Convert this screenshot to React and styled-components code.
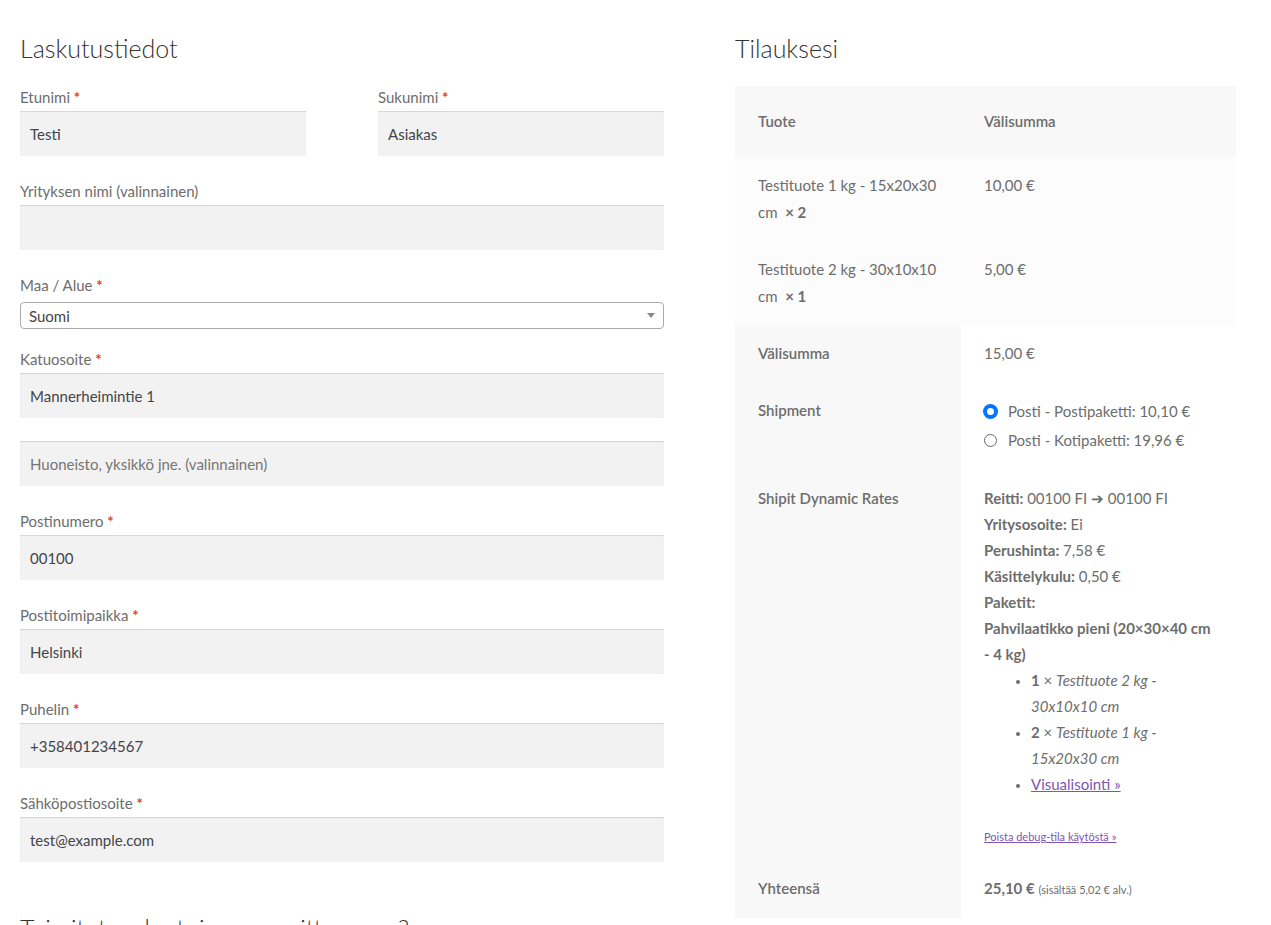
import React from 'react';
import styled, { createGlobalStyle } from 'styled-components';

const Global = createGlobalStyle`
  body {
    margin: 0;
    background: #fff;
    font-family: 'Source Sans Pro', Lato, 'Noto Sans', sans-serif;
    color: #6d6d6d;
    font-size: 15px;
  }
`;

const Page = styled.div`
  display: grid;
  grid-template-columns: 644px 501px;
  column-gap: 71px;
  padding: 30px 0 0 20px;
  height: 895px;
  overflow: hidden;
`;

const Heading = styled.h3`
  margin: 0 0 ${({ $mb }) => $mb || 20}px;
  font-size: 25px;
  font-weight: 300;
  color: #333;
  line-height: 36px;
`;

const Row = styled.div`
  display: grid;
  grid-template-columns: 286px 286px;
  justify-content: space-between;
`;

const Field = styled.div`
  margin-bottom: ${({ $mb }) => ($mb === undefined ? 24 : $mb)}px;
`;

const Label = styled.label`
  display: block;
  line-height: 22px;
  margin-bottom: 3px;
`;

const Req = styled.span`
  color: #e2401c;
  font-weight: 700;
`;

const Input = styled.div`
  height: 45px;
  box-sizing: border-box;
  background: #f2f2f2;
  box-shadow: inset 0 1px 1px rgba(0, 0, 0, 0.125);
  padding: 0 10px;
  display: flex;
  align-items: center;
  color: ${({ $ph }) => ($ph ? '#757575' : '#43454b')};
`;

const Select = styled.div`
  height: 27px;
  box-sizing: border-box;
  border: 1px solid #aaa;
  border-radius: 4px;
  padding: 0 8px;
  display: flex;
  align-items: center;
  justify-content: space-between;
  color: #444;
  margin-top: 6px;
`;

const Caret = styled.span`
  width: 0;
  height: 0;
  border-left: 4px solid transparent;
  border-right: 4px solid transparent;
  border-top: 5px solid #888;
`;

const Table = styled.table`
  width: 100%;
  table-layout: fixed;
  border-collapse: collapse;
  line-height: 27px;
  margin-top: 12px;
`;

const Th = styled.th`
  text-align: left;
  font-weight: 600;
  vertical-align: top;
  padding: ${({ $p }) => $p || '15px 23px'};
  background: ${({ $bg }) => $bg || '#f8f8f8'};
`;

const Td = styled.td`
  vertical-align: top;
  padding: ${({ $p }) => $p || '15px 23px'};
  background: ${({ $bg }) => $bg || '#fff'};
`;

const Radio = styled.div`
  display: flex;
  align-items: center;
  gap: 11px;
  line-height: 29px;
  white-space: nowrap;
`;

const Dot = styled.span`
  flex-shrink: 0;
  width: 13px;
  height: 13px;
  border-radius: 50%;
  box-sizing: border-box;
  border: ${({ $on }) => ($on ? '3px solid #0075ff' : '1px solid #666')};
  box-shadow: ${({ $on }) => ($on ? '0 0 0 1px #0075ff' : 'none')};
  background: #fff;
`;

const Line = styled.div`
  line-height: 26px;
`;

const List = styled.ul`
  margin: 0;
  padding-left: 47px;
  line-height: 26px;
  li::marker { font-size: 12px; }
`;

const Link = styled.a`
  color: #7f54b3;
  text-decoration: underline;
  font-size: ${({ $small }) => ($small ? '11px' : 'inherit')};
`;

const Debug = styled.div`
  margin-top: 30px;
  line-height: 16px;
`;

const Small = styled.small`
  font-size: 11px;
`;

const fields = [
  ['Katuosoite', 'Mannerheimintie 1', true, 23],
  [null, 'Huoneisto, yksikkö jne. (valinnainen)', false],
  ['Postinumero', '00100', true],
  ['Postitoimipaikka', 'Helsinki', true],
  ['Puhelin', '+358401234567', true],
  ['Sähköpostiosoite', 'test@example.com', true, 48],
];

export default function App() {
  return (
    <>
      <Global />
      <Page>
        <div>
          <Heading>Laskutustiedot</Heading>
          <Row>
            <Field>
              <Label>Etunimi <Req>*</Req></Label>
              <Input>Testi</Input>
            </Field>
            <Field>
              <Label>Sukunimi <Req>*</Req></Label>
              <Input>Asiakas</Input>
            </Field>
          </Row>
          <Field>
            <Label>Yrityksen nimi (valinnainen)</Label>
            <Input />
          </Field>
          <Field $mb={19}>
            <Label>Maa / Alue <Req>*</Req></Label>
            <Select>Suomi<Caret /></Select>
          </Field>
          {fields.map(([label, value, req, mb]) => (
            <Field key={value} $mb={mb}>
              {label && <Label>{label} {req && <Req>*</Req>}</Label>}
              <Input $ph={!label}>{value}</Input>
            </Field>
          ))}
          <Heading>Toimitetaanko toiseen osoitteeseen?</Heading>
        </div>
        <div>
          <Heading $mb={0}>Tilauksesi</Heading>
          <Table>
            <colgroup>
              <col style={{ width: 226 }} />
              <col />
            </colgroup>
            <thead>
              <tr>
                <Th $p="22px 23px">Tuote</Th>
                <Th $p="22px 23px">Välisumma</Th>
              </tr>
            </thead>
            <tbody>
              <tr>
                <Td $bg="#fcfcfc">Testituote 1 kg - 15x20x30 cm&nbsp; <strong>×&nbsp;2</strong></Td>
                <Td $bg="#fcfcfc">10,00 €</Td>
              </tr>
              <tr>
                <Td $bg="#fcfcfc">Testituote 2 kg - 30x10x10 cm&nbsp; <strong>×&nbsp;1</strong></Td>
                <Td $bg="#fcfcfc">5,00 €</Td>
              </tr>
            </tbody>
            <tfoot>
              <tr>
                <Th>Välisumma</Th>
                <Td>15,00 €</Td>
              </tr>
              <tr>
                <Th>Shipment</Th>
                <Td>
                  <Radio><Dot $on />Posti - Postipaketti: 10,10 €</Radio>
                  <Radio><Dot />Posti - Kotipaketti: 19,96 €</Radio>
                </Td>
              </tr>
              <tr>
                <Th>Shipit Dynamic Rates</Th>
                <Td>
                  <Line><strong>Reitti:</strong> 00100 FI ➔ 00100 FI</Line>
                  <Line><strong>Yritysosoite:</strong> Ei</Line>
                  <Line><strong>Perushinta:</strong> 7,58 €</Line>
                  <Line><strong>Käsittelykulu:</strong> 0,50 €</Line>
                  <Line><strong>Paketit:</strong></Line>
                  <Line><strong>Pahvilaatikko pieni (20×30×40 cm - 4 kg)</strong></Line>
                  <List>
                    <li><strong>1</strong> × <em>Testituote 2 kg - 30x10x10 cm</em></li>
                    <li><strong>2</strong> × <em>Testituote 1 kg - 15x20x30 cm</em></li>
                    <li><Link href="#">Visualisointi »</Link></li>
                  </List>
                  <Debug><Link href="#" $small>Poista debug-tila käytöstä »</Link></Debug>
                </Td>
              </tr>
              <tr>
                <Th>Yhteensä</Th>
                <Td><strong>25,10 €</strong> <Small>(sisältää 5,02 € alv.)</Small></Td>
              </tr>
            </tfoot>
          </Table>
        </div>
      </Page>
    </>
  );
}
